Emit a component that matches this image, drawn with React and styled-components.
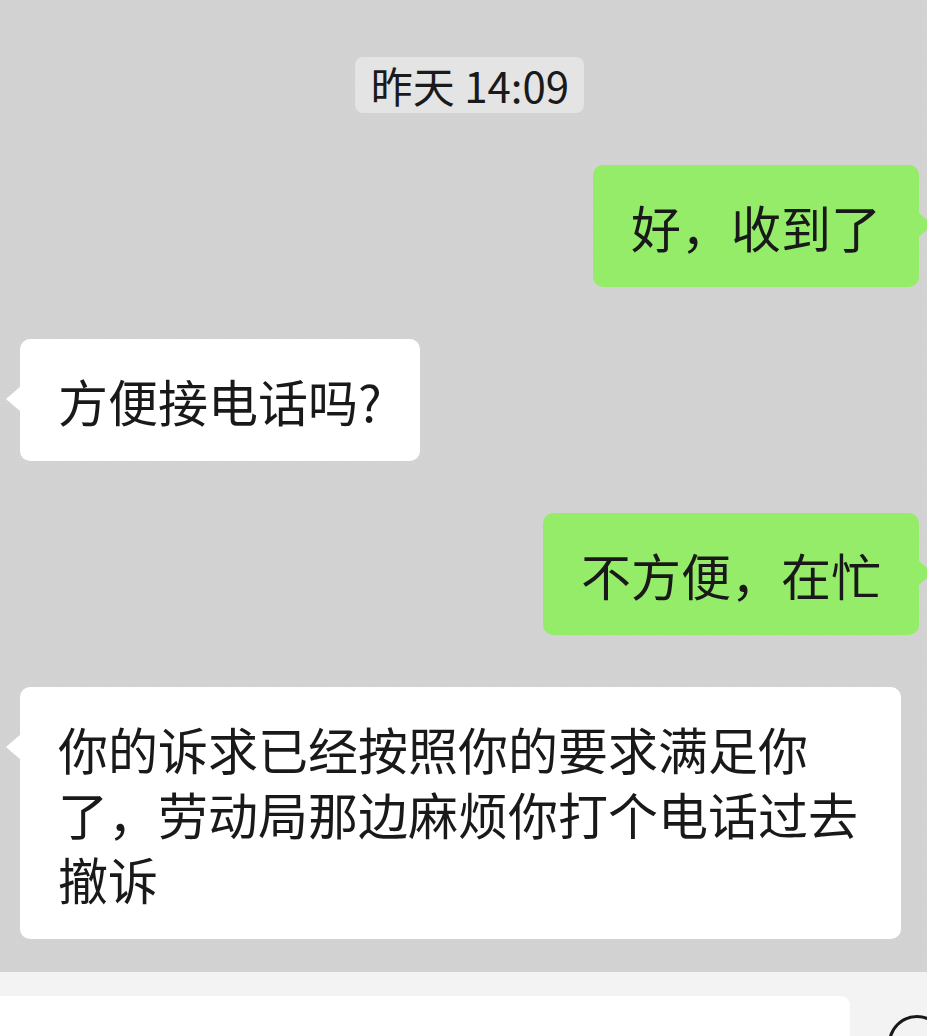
import styled, {createGlobalStyle} from 'styled-components';

const GlobalStyle = createGlobalStyle`
  html, body {
    margin: 0;
    padding: 0;
    overflow: hidden;
  }
  body {
    font-family: "Noto Sans CJK SC", "Noto Sans", sans-serif;
    color: #191919;
  }
`;

const messages = [
    {id: 1, mine: true, text: '好，收到了'},
    {id: 2, mine: false, text: '方便接电话吗?'},
    {id: 3, mine: true, text: '不方便，在忙'},
    {id: 4, mine: false, text: '你的诉求已经按照你的要求满足你了，劳动局那边麻烦你打个电话过去撤诉'},
];

export default function App() {
    return (
        <>
            <GlobalStyle/>
            <Screen>
                <ChatArea>
                    <TimeRow>
                        <TimePill>昨天 14:09</TimePill>
                    </TimeRow>
                    {messages.map((m) => (
                        <Row key={m.id} $mine={m.mine}>
                            <Bubble $mine={m.mine}>{m.text}</Bubble>
                        </Row>
                    ))}
                </ChatArea>
                <InputBar>
                    <InputBox/>
                    <VoiceButton/>
                </InputBar>
            </Screen>
        </>
    );
}

const Screen = styled.div`
  width: 927px;
  height: 1036px;
  display: flex;
  flex-direction: column;
  overflow: hidden;
  background: #d1d1d1;
`;

const ChatArea = styled.div`
  height: 972px;
  flex-shrink: 0;
  box-sizing: border-box;
  padding: 57px 0 0;
  display: flex;
  flex-direction: column;
  gap: 52px;
  background-color: #d2d2d2;
  background-image: radial-gradient(rgba(255, 255, 255, 0.08) 1px, transparent 1px);
  background-size: 3px 3px;
`;

const TimeRow = styled.div`
  display: flex;
  justify-content: center;
  padding-left: 12px;
`;

const TimePill = styled.div`
  height: 56px;
  box-sizing: border-box;
  padding: 0 15px 0 16px;
  border-radius: 8px;
  background: #e4e4e4;
  font-size: 42px;
  line-height: 56px;
  color: #1a1a1a;
`;

const Row = styled.div`
  display: flex;
  justify-content: ${(p) => (p.$mine ? 'flex-end' : 'flex-start')};
  padding: ${(p) => (p.$mine ? '0 8px 0 0' : '0 0 0 20px')};
`;

const Bubble = styled.div`
  position: relative;
  max-width: 881px;
  box-sizing: border-box;
  padding: 29px 38px 28px;
  border-radius: 10px;
  background: ${(p) => (p.$mine ? '#95ec69' : '#ffffff')};
  font-size: 50px;
  line-height: 65px;
  line-break: strict;

  &::before {
    content: '';
    position: absolute;
    top: 47px;
    ${(p) => (p.$mine ? 'right: -13px;' : 'left: -14px;')}
    width: 0;
    height: 0;
    border-top: 13px solid transparent;
    border-bottom: 13px solid transparent;
    ${(p) => (p.$mine
        ? 'border-left: 14px solid #95ec69;'
        : 'border-right: 15px solid #ffffff;')}
  }
`;

const InputBar = styled.div`
  flex: 1;
  display: flex;
  align-items: flex-start;
  padding-top: 24px;
  gap: 38px;
  background: #f3f3f3;
`;

const InputBox = styled.div`
  flex-shrink: 0;
  width: 850px;
  height: 80px;
  background: #ffffff;
  border-radius: 0 9px 0 0;
`;

const VoiceButton = styled.div`
  flex-shrink: 0;
  width: 58px;
  height: 58px;
  margin-top: 19px;
  box-sizing: border-box;
  border: 3.5px solid #181818;
  border-radius: 50%;
`;
